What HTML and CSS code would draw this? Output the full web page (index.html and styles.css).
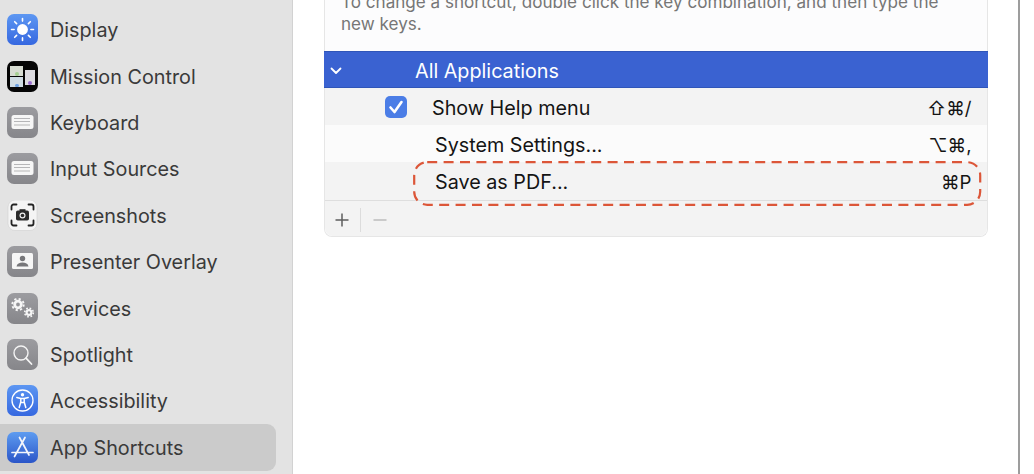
FILE: index.html
```html
<!DOCTYPE html>
<html lang="en">
<head>
<meta charset="utf-8">
<title>App Shortcuts</title>
<link rel="stylesheet" href="styles.css">
</head>
<body>
<div class="window">
  <nav class="sidebar">
    <div class="nav-item"><span class="icon"><svg viewBox="0 0 31 31"><defs><linearGradient id="gb" x1="0" y1="0" x2="0" y2="1"><stop offset="0" stop-color="#5d97f2"/><stop offset="1" stop-color="#3668e0"/></linearGradient></defs><rect width="31" height="31" rx="7" fill="url(#gb)"/><circle cx="15.5" cy="15.5" r="5.4" fill="#fff"/><g stroke="#fff" stroke-width="1.6" stroke-linecap="round"><path d="M15.5 4.5v2.6M15.5 23.9v2.6M4.5 15.5h2.6M23.9 15.5h2.6M7.7 7.7l1.9 1.9M21.4 21.4l1.9 1.9M7.7 23.3l1.9-1.9M21.4 9.6l1.9-1.9"/></g></svg></span><span class="label">Display</span></div>
    <div class="nav-item"><span class="icon"><svg viewBox="0 0 31 31"><rect width="31" height="31" rx="7" fill="#050505"/><rect x="3" y="5" width="13" height="10" fill="#d7dcd2"/><rect x="3" y="16" width="13" height="10" fill="#cfdbe3"/><rect x="18" y="9" width="10" height="15" fill="#dcdbe0"/><rect x="8" y="11" width="4" height="4" rx="2" fill="#a5cf92"/><rect x="8" y="23" width="4" height="3" rx="1.5" fill="#6a9fe0"/><rect x="21" y="20" width="4" height="4" rx="2" fill="#9b6fd0"/></svg></span><span class="label">Mission Control</span></div>
    <div class="nav-item"><span class="icon"><svg viewBox="0 0 31 31"><defs><linearGradient id="gg" x1="0" y1="0" x2="0" y2="1"><stop offset="0" stop-color="#9c9ca0"/><stop offset="1" stop-color="#86868a"/></linearGradient></defs><rect width="31" height="31" rx="7" fill="url(#gg)"/><rect x="4.500" y="8" width="22" height="14" rx="2.500" fill="#f6f6f6"/><path d="M7.500 11.500h16M7.500 14.500h16M7.500 18h16" stroke="#77777a" stroke-width="1.200" stroke-dasharray="1 1"/></svg></span><span class="label">Keyboard</span></div>
    <div class="nav-item"><span class="icon"><svg viewBox="0 0 31 31"><rect width="31" height="31" rx="7" fill="url(#gg)"/><rect x="4.500" y="8" width="22" height="14" rx="2.500" fill="#f6f6f6"/><path d="M7.500 11.500h16M7.500 14.500h16M7.500 18h16" stroke="#77777a" stroke-width="1.200" stroke-dasharray="1 1"/></svg></span><span class="label">Input Sources</span></div>
    <div class="nav-item"><span class="icon"><svg viewBox="0 0 31 31"><rect x="1" y="0" width="29" height="30.500" rx="7" fill="#f4f4f4" stroke="#d0d0d0" stroke-width=".6"/><path d="M4.500 9.500V6.500a2 2 0 0 1 2-2h3M21.500 4.500h3a2 2 0 0 1 2 2v3M26.500 20.500v3a2 2 0 0 1-2 2h-3M9.500 25.500h-3a2 2 0 0 1-2-2v-3" fill="none" stroke="#222" stroke-width="1.800" stroke-linecap="round"/><rect x="9" y="10.500" width="13" height="10" rx="1.800" fill="#2a2a2a"/><rect x="12.500" y="9.200" width="6" height="2" fill="#2a2a2a"/><circle cx="15.500" cy="15.500" r="3" fill="#eee"/><circle cx="15.500" cy="15.500" r="1.800" fill="#2a2a2a"/></svg></span><span class="label">Screenshots</span></div>
    <div class="nav-item"><span class="icon"><svg viewBox="0 0 31 31"><rect width="31" height="31" rx="7" fill="url(#gg)"/><rect x="5" y="7" width="21" height="16" rx="1.500" fill="#f6f6f6"/><circle cx="15.500" cy="12.500" r="2.700" fill="#77777a"/><path d="M9.500 20.500c.5-3 3-4 6-4s5.500 1 6 4z" fill="#77777a"/></svg></span><span class="label">Presenter Overlay</span></div>
    <div class="nav-item"><span class="icon"><svg viewBox="0 0 31 31"><rect width="31" height="31" rx="7" fill="url(#gg)"/><g fill="none" stroke="#f6f6f6"><circle cx="11" cy="11.500" r="3.300" stroke-width="2.800"/><circle cx="11" cy="11.500" r="5.700" stroke-width="1.900" stroke-dasharray="2.200 2.270"/><circle cx="22" cy="19.500" r="2.400" stroke-width="2.200"/><circle cx="22" cy="19.500" r="4.300" stroke-width="1.600" stroke-dasharray="1.700 1.680"/></g></svg></span><span class="label">Services</span></div>
    <div class="nav-item"><span class="icon"><svg viewBox="0 0 31 31"><rect width="31" height="31" rx="7" fill="url(#gg)"/><circle cx="14" cy="14" r="7" fill="none" stroke="#f4f4f4" stroke-width="1.400"/><path d="M19 19.200l5.500 5.800" stroke="#f4f4f4" stroke-width="1.800" stroke-linecap="round"/></svg></span><span class="label">Spotlight</span></div>
    <div class="nav-item"><span class="icon"><svg viewBox="0 0 31 31"><rect width="31" height="31" rx="7" fill="url(#gb)"/><circle cx="15.500" cy="15.500" r="10.500" fill="none" stroke="#fff" stroke-width="1.300"/><circle cx="15.500" cy="9.800" r="1.700" fill="#fff"/><path d="M9.800 12.500l4 1v3.500l-1.600 5.500M21.200 12.500l-4 1v3.500l1.600 5.500M13.800 13.500h3.400M14.500 17.500h2" fill="none" stroke="#fff" stroke-width="1.500" stroke-linecap="round" stroke-linejoin="round"/></svg></span><span class="label">Accessibility</span></div>
    <div class="nav-item active"><span class="icon"><svg viewBox="0 0 31 31"><defs><linearGradient id="ga" x1="0" y1="0" x2="0" y2="1"><stop offset="0" stop-color="#5e9cf0"/><stop offset="1" stop-color="#2a55c8"/></linearGradient></defs><rect width="31" height="31" rx="7" fill="url(#ga)"/><path d="M12.500 5.500l9.500 17.500M18 5.500L10 20l-2.500 4.500M5 20.500h21" fill="none" stroke="#f4f6fb" stroke-width="1.700" stroke-linecap="round"/></svg></span><span class="label">App Shortcuts</span></div>
  </nav>
  <main class="content">
    <div class="panel">
      <p class="hint">To change a shortcut, double click the key combination, and then type the new keys.</p>
      <div class="table">
        <div class="row head">
          <svg class="chevron" viewBox="0 0 14 14"><path d="M2.500 4.500L7 9l4.500-4.500" fill="none" stroke="#fff" stroke-width="1.800" stroke-linecap="round" stroke-linejoin="round"/></svg>
          <span class="head-label">All Applications</span>
        </div>
        <div class="row odd r1">
          <span class="check"><svg viewBox="0 0 22 22"><path d="M5.500 11.500l4 4.500 7-10" fill="none" stroke="#fff" stroke-width="2.600" stroke-linecap="round" stroke-linejoin="round"/></svg></span>
          <span class="name">Show Help menu</span>
          <span class="keys">⇧⌘/</span>
        </div>
        <div class="row even r2">
          <span class="name">System Settings...</span>
          <span class="keys">⌥⌘,</span>
        </div>
        <div class="row odd r3">
          <span class="name">Save as PDF...</span>
          <span class="keys">⌘P</span>
          <svg class="callout" width="570" height="45" viewBox="0 0 570 45"><rect x="1.200" y="1.200" width="566" height="42.600" rx="13" fill="none" stroke="#dc5638" stroke-width="2.200" stroke-dasharray="10 6.400"/></svg>
        </div>
      </div>
      <div class="toolbar">
        <svg class="tool" viewBox="0 0 16 16"><path d="M8 1.500v13M1.500 8h13" stroke="#5e5e5e" stroke-width="1.500"/></svg>
        <span class="divider"></span>
        <svg class="tool" viewBox="0 0 16 16"><path d="M1.500 8h13" stroke="#bdbdbd" stroke-width="1.500"/></svg>
      </div>
    </div>
  </main>
  <div class="edge"></div>
</div>
</body>
</html>
```
FILE: styles.css
```css
* { box-sizing: border-box; }
html, body { margin: 0; height: 474px; overflow: hidden; background: #fff; }
body { font-family: Inter, "Liberation Sans", sans-serif; }
.window { display: flex; width: 1034px; height: 474px; overflow: hidden; }
.sidebar {
  flex: 0 0 293px;
  display: flex;
  flex-direction: column;
  padding: 6.600px 16.500px 0 0;
  background: #e3e3e3;
  border-right: 1.500px solid #d2d2d2;
}
.nav-item {
  flex: 0 0 46.4px;
  display: flex;
  align-items: center;
  gap: 12.500px;
  padding-left: 6.500px;
  font-size: 19.800px;
  color: #3a3a3a;
  border-radius: 0 9px 9px 0;
}
.nav-item.active { background: #cbcbcb; }
.label { padding-top: 1px; }
.icon { flex: 0 0 31px; width: 31px; height: 31px; display: block; }
.icon svg { display: block; width: 31px; height: 31px; }
.content { flex: 0 0 725px; height: 474px; padding-left: 31px; overflow: hidden; background: #fff; }
.edge { flex: 0 0 2px; height: 474px; background: #9d9d9d; }
.panel {
  width: 664px;
  margin-top: -12px;
  background: #fcfcfd;
  border: 1px solid #e6e6e6;
  border-top: 0;
  border-radius: 0 0 8px 8px;
}
.hint {
  margin: 0;
  padding: 3px 16px 0;
  height: 63px;
  font-size: 17.100px;
  line-height: 22px;
  color: #767676;
}
.row { display: flex; align-items: center; font-size: 19.750px; color: #141414; position: relative; }
.head { height: 37px; background: #3a62d1; border-top: 1px solid #2f55b8; border-bottom: 1px solid #2f55b8; color: #fff; padding-left: 5px; padding-top: 2px; margin-left: -1px; margin-right: -1px; }
.chevron { width: 14px; height: 14px; flex: 0 0 14px; }
.head-label { margin-left: 72px; }
.odd { background: #f3f3f3; }
.even { background: #fbfbfb; }
.r1 { height: 37px; padding-left: 60px; padding-top: 2px; }
.r2 { height: 37px; padding-left: 110px; padding-top: 2px; }
.r3 { height: 39px; padding-left: 110px; padding-top: 2px; border-bottom: 1px solid #dedede; }
.check { flex: 0 0 22px; width: 22px; height: 22px; border-radius: 5px; background: #4b7de6; margin: -2px 25px 0 0; }
.check svg { display: block; width: 22px; height: 22px; }
.keys { margin-left: auto; padding-right: 15.500px; font-size: 18.600px; font-family: Inter, "Noto Sans CJK JP", "DejaVu Sans", sans-serif; }
.callout { position: absolute; left: 88px; top: -1px; }
.toolbar { height: 35px; display: flex; align-items: center; padding: 2px 0 0 9px; background: #f3f3f3; border-radius: 0 0 8px 8px; }
.tool { width: 16px; height: 16px; flex: 0 0 16px; }
.divider { width: 1px; height: 24px; background: #dcdcdc; margin: 0 11px 0 10px; }
```
